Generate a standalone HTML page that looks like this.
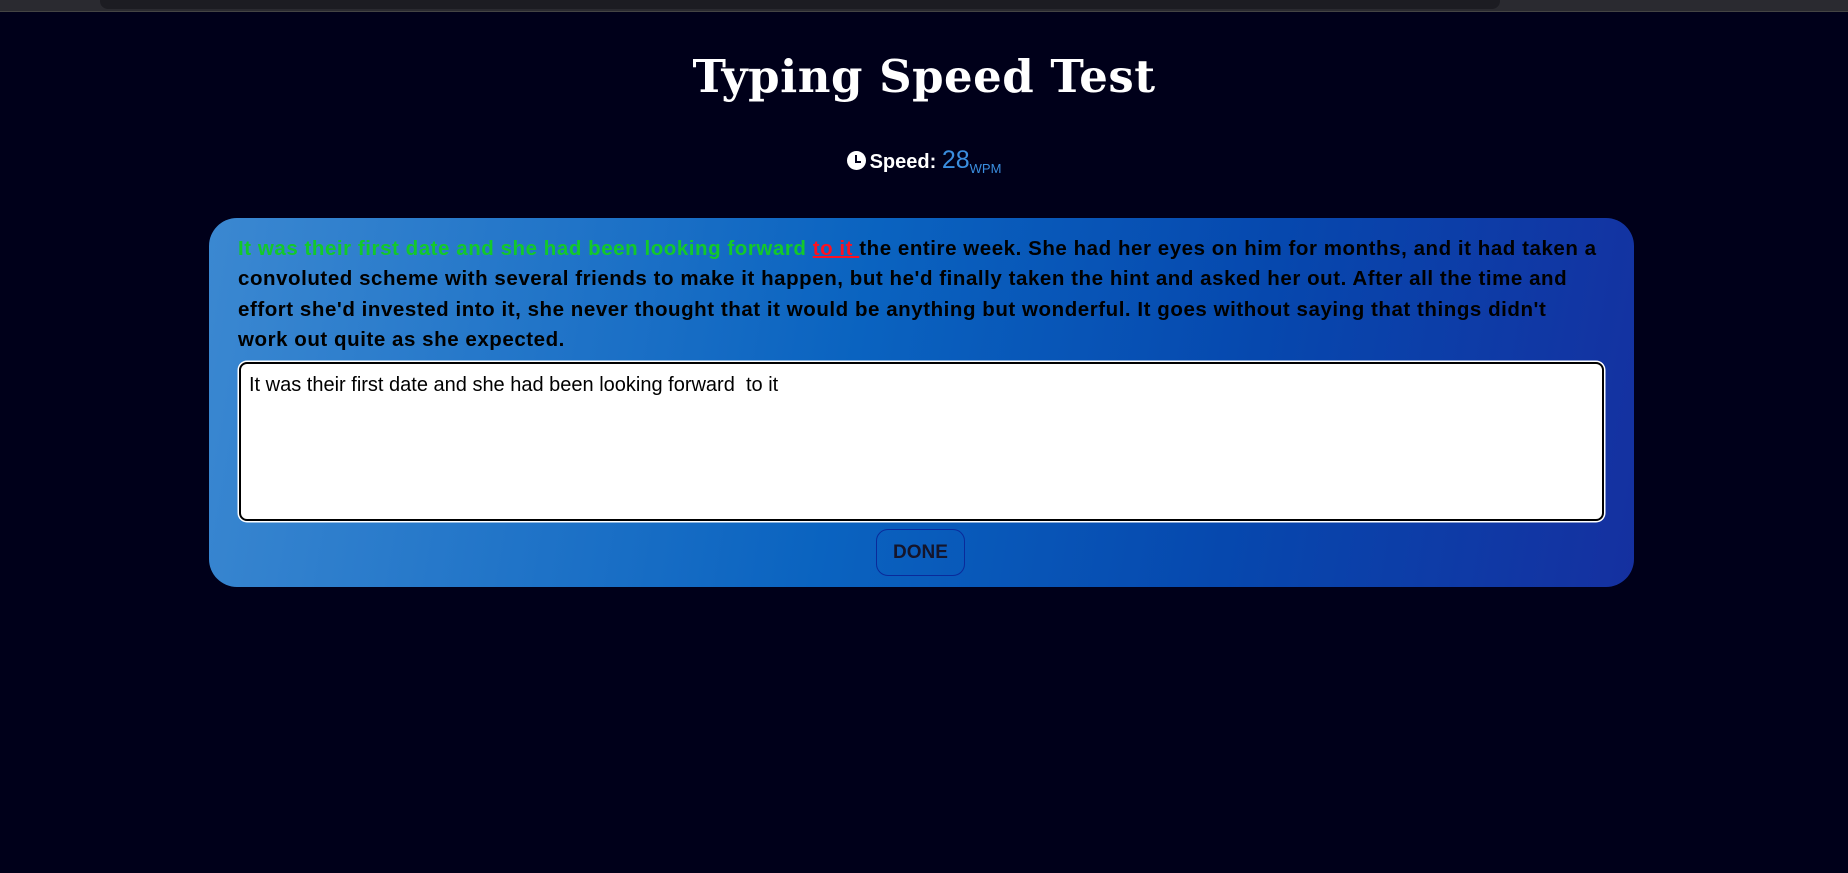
<!DOCTYPE html>
<html><head><style>
html,body{margin:0;width:1848px;height:873px;overflow:hidden;background:#00001a;font-family:"Liberation Sans",sans-serif}
.top{position:absolute;left:0;top:0;width:1848px;height:11px;background:#2a2a30;border-bottom:1px solid #444}
.top .u{position:absolute;left:100px;top:0;width:1400px;height:9px;background:#1c1c22;border-radius:0 0 8px 8px}
h1{position:absolute;top:50px;left:0;width:1848px;text-align:center;margin:0;color:#fff;font-family:"DejaVu Serif",serif;font-weight:bold;font-size:45px;letter-spacing:0.5px}
.speed{position:absolute;top:146px;left:0;width:1848px;text-align:center;color:#fff;font-weight:bold;font-size:20px}
.speed .n{color:#3a8ee0;font-weight:normal;font-size:25px}
.speed sub{color:#3a8ee0;font-size:13px;font-weight:normal}
.clk{display:inline-block;width:19px;height:19px;border-radius:50%;background:#fff;vertical-align:-2px;position:relative;margin-right:4px}
.clk:after{content:"";position:absolute;left:8px;top:4px;width:4px;height:6px;border-left:2px solid #00001a;border-bottom:2px solid #00001a}
.card{position:absolute;left:209px;top:218px;width:1425px;height:369px;border-radius:28px;background:linear-gradient(100deg,#3b88d1 0%,#0a63c0 45%,#0648ae 72%,#1530a0 100%)}
.txt{position:absolute;left:29px;top:16px;width:1420px;white-space:nowrap;font-weight:bold;font-size:20.5px;line-height:30.3px;color:#000;letter-spacing:.55px}
.g{color:#13c92a}.r{color:#ff1020;text-decoration:underline;text-decoration-thickness:2px}
.ta{position:absolute;left:30px;top:144px;width:1365px;height:159px;background:#fff;border:2px solid #000;border-radius:8px;box-shadow:0 0 0 1.5px #fff;font-size:20px;color:#000;padding:10px 8px;box-sizing:border-box}
.btn{position:absolute;left:667px;top:311px;width:89px;height:47px;border:1px solid #0a2a9a;border-radius:12px;box-sizing:border-box;text-align:center;line-height:45px;font-weight:bold;font-size:19px;color:#15152a}
</style></head><body>
<div class="top"><div class="u"></div></div>
<h1>Typing Speed Test</h1>
<div class="speed"><span class="clk"></span>Speed: <span class="n">28</span><sub>WPM</sub></div>
<div class="card">
<div class="txt"><span class="g">It was their first date and she had been looking forward </span><span class="r">to it </span>the entire week. She had her eyes on him for months, and it had taken a<br>convoluted scheme with several friends to make it happen, but he'd finally taken the hint and asked her out. After all the time and<br>effort she'd invested into it, she never thought that it would be anything but wonderful. It goes without saying that things didn't<br>work out quite as she expected.</div>
<div class="ta">It was their first date and she had been looking forward&nbsp; to it</div>
<div class="btn">DONE</div>
</div>
</body></html>
